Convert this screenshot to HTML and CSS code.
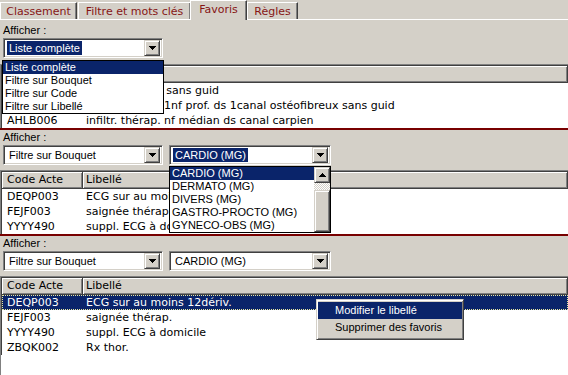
FILE: index.html
```html
<!DOCTYPE html>
<html lang="fr">
<head>
    <meta charset="UTF-8">
    <title>Favoris</title>
    <link rel="stylesheet" href="styles.css">
</head>
<body>
    <div class="tabs">
        <div class="tab t-classement">Classement</div>
        <div class="tab t-filtre">Filtre et mots clés</div>
        <div class="tab t-favoris active">Favoris</div>
        <div class="tab t-regles">Règles</div>
    </div>

    <!-- vue 1 : liste d'affichage ouverte -->
    <section class="panel p1">
        <div class="label">Afficher :</div>
        <div class="filters">
            <div class="combo c1">
                <div class="combo-box">
                    <span class="value sel">Liste complète</span>
                    <span class="btn"><svg width="7" height="4" viewBox="0 0 7 4" shape-rendering="crispEdges"><path d="M0 0h7v1h-1v1h-1v1h-1v1h-1v-1h-1v-1h-1v-1h-1z"/></svg></span>
                </div>
                <ul class="droplist">
                    <li class="hl">Liste complète</li>
                    <li>Filtre sur Bouquet</li>
                    <li>Filtre sur Code</li>
                    <li>Filtre sur Libellé</li>
                </ul>
            </div>
        </div>
        <div class="grid">
            <div class="grid-inner">
                <div class="ghead">
                    <div class="hcell code">Code Acte</div>
                    <div class="hcell lib">Libellé</div>
                </div>
                <div class="row"><span class="code">AHLB004</span><span class="lib">infiltr. thérap.&thinsp; sans guid</span></div>
                <div class="row"><span class="code">AHLB005</span><span class="lib">infiltr. thérap, 1nf prof. ds 1canal ostéofibreux sans guid</span></div>
                <div class="row"><span class="code">AHLB006</span><span class="lib">infiltr. thérap. nf médian ds canal carpien</span></div>
            </div>
        </div>
    </section>

    <!-- vue 2 : liste des bouquets ouverte -->
    <section class="panel p2">
        <div class="label">Afficher :</div>
        <div class="filters">
            <div class="combo c1">
                <div class="combo-box">
                    <span class="value">Filtre sur Bouquet</span>
                    <span class="btn"><svg width="7" height="4" viewBox="0 0 7 4" shape-rendering="crispEdges"><path d="M0 0h7v1h-1v1h-1v1h-1v1h-1v-1h-1v-1h-1v-1h-1z"/></svg></span>
                </div>
            </div>
            <div class="combo c2">
                <div class="combo-box">
                    <span class="value sel">CARDIO (MG)</span>
                    <span class="btn"><svg width="7" height="4" viewBox="0 0 7 4" shape-rendering="crispEdges"><path d="M0 0h7v1h-1v1h-1v1h-1v1h-1v-1h-1v-1h-1v-1h-1z"/></svg></span>
                </div>
                <div class="droplist drop2">
                    <ul class="items">
                        <li class="hl">CARDIO (MG)</li>
                        <li>DERMATO (MG)</li>
                        <li>DIVERS (MG)</li>
                        <li>GASTRO-PROCTO (MG)</li>
                        <li>GYNECO-OBS (MG)</li>
                    </ul>
                    <div class="scrollbar">
                        <span class="btn sbtn"><svg width="7" height="4" viewBox="0 0 7 4" shape-rendering="crispEdges"><path d="M3 0h1v1h1v1h1v1h1v1h-7v-1h1v-1h1v-1h1z"/></svg></span>
                        <span class="track"></span>
                        <span class="thumb"></span>
                    </div>
                </div>
            </div>
        </div>
        <div class="grid">
            <div class="grid-inner">
                <div class="ghead">
                    <div class="hcell code">Code Acte</div>
                    <div class="hcell lib">Libellé</div>
                </div>
                <div class="row"><span class="code">DEQP003</span><span class="lib">ECG sur au moins 12dériv.</span></div>
                <div class="row"><span class="code">FEJF003</span><span class="lib">saignée thérap.</span></div>
                <div class="row"><span class="code">YYYY490</span><span class="lib">suppl. ECG à domicile</span></div>
            </div>
        </div>
    </section>

    <!-- vue 3 : menu contextuel sur un favori -->
    <section class="panel p3">
        <div class="label">Afficher :</div>
        <div class="filters">
            <div class="combo c1">
                <div class="combo-box">
                    <span class="value">Filtre sur Bouquet</span>
                    <span class="btn"><svg width="7" height="4" viewBox="0 0 7 4" shape-rendering="crispEdges"><path d="M0 0h7v1h-1v1h-1v1h-1v1h-1v-1h-1v-1h-1v-1h-1z"/></svg></span>
                </div>
            </div>
            <div class="combo c2">
                <div class="combo-box">
                    <span class="value">CARDIO (MG)</span>
                    <span class="btn"><svg width="7" height="4" viewBox="0 0 7 4" shape-rendering="crispEdges"><path d="M0 0h7v1h-1v1h-1v1h-1v1h-1v-1h-1v-1h-1v-1h-1z"/></svg></span>
                </div>
            </div>
        </div>
        <div class="grid">
            <div class="grid-inner">
                <div class="ghead">
                    <div class="hcell code">Code Acte</div>
                    <div class="hcell lib">Libellé</div>
                </div>
                <div class="row sel"><span class="code">DEQP003</span><span class="lib">ECG sur au moins 12dériv.</span></div>
                <div class="row"><span class="code">FEJF003</span><span class="lib">saignée thérap.</span></div>
                <div class="row"><span class="code">YYYY490</span><span class="lib">suppl. ECG à domicile</span></div>
                <div class="row"><span class="code">ZBQK002</span><span class="lib">Rx thor.</span></div>
            </div>
        </div>
        <ul class="ctx-menu">
            <li class="hl">Modifier le libellé</li>
            <li>Supprimer des favoris</li>
        </ul>
    </section>
</body>
</html>
```

FILE: styles.css
```css
* {
    margin: 0;
    padding: 0;
    box-sizing: border-box;
}
body {
    width: 568px;
    height: 375px;
    overflow: hidden;
    background-color: #d4d0c8;
    font-family: 'Liberation Sans', Arial, sans-serif;
    font-size: 11px;
    color: #000;
}

/* onglets */
.tabs {
    display: flex;
    align-items: flex-end;
    height: 20px;
    border-bottom: 1px solid #fff;
}
.tab {
    height: 17px;
    margin-right: 1px;
    border: 1px solid #fff;
    border-bottom: none;
    border-right-color: #404040;
    box-shadow: inset -1px 0 #808080;
    font-family: 'DejaVu Sans', Verdana, sans-serif;
    font-size: 11px;
    line-height: 17px;
    text-align: center;
    color: #861515;
}
.t-classement { width: 77px; }
.t-filtre { width: 113px; margin-right: 0; }
.t-favoris { width: 57px; }
.t-regles { width: 51px; }
.tab.active {
    height: 20px;
    margin: 0 0 -1px -1px;
    line-height: 18px;
    background-color: #d4d0c8;
    position: relative;
}

/* panneaux */
.panel {
    border-bottom: 2px solid #780000;
    position: relative;
}
.p1 { padding-top: 3px; }
.p3 { border-bottom: none; }
.label {
    height: 15px;
    line-height: 15px;
    padding-left: 3px;
}
.filters {
    display: flex;
    gap: 6px;
    height: 20px;
    padding-left: 3px;
    margin-bottom: 5px;
}
.p1 .filters { margin-bottom: 6px; }

/* listes deroulantes */
.combo {
    position: relative;
    height: 20px;
}
.c1 { width: 160px; }
.c2 { width: 162px; }
.combo-box {
    height: 20px;
    display: flex;
    align-items: center;
    justify-content: space-between;
    padding: 2px;
    background-color: #fff;
    border: 1px solid;
    border-color: #808080 #fff #fff #808080;
    box-shadow: inset 1px 1px #404040, inset -1px -1px #d4d0c8;
}
.value {
    margin-left: 1px;
    padding: 0 2px;
    line-height: 14px;
    white-space: nowrap;
}
.value.sel,
.hl {
    background-color: #0a246a;
    color: #fff;
}
.btn {
    width: 16px;
    height: 16px;
    flex: none;
    display: flex;
    align-items: center;
    justify-content: center;
    background-color: #d4d0c8;
    border: 1px solid;
    border-color: #d4d0c8 #404040 #404040 #d4d0c8;
    box-shadow: inset 1px 1px #fff, inset -1px -1px #808080;
}
.droplist {
    position: absolute;
    left: -1px;
    top: 22px;
    width: 162px;
    z-index: 5;
    list-style-type: none;
    background-color: #fff;
    border: 1px solid #000;
}
.droplist li,
.items li {
    height: 13px;
    line-height: 13px;
    padding-left: 2px;
    white-space: nowrap;
}
.drop2 {
    left: 0;
    top: 21px;
    display: flex;
}
.items {
    flex: 1;
    list-style-type: none;
}
.scrollbar {
    width: 16px;
    display: flex;
    flex-direction: column;
}
.track {
    height: 7px;
    background: repeating-conic-gradient(#d4d0c8 0 25%, #fff 0 50%) 0 0 / 2px 2px;
}
.thumb {
    flex: 1;
    background-color: #d4d0c8;
    border: 1px solid;
    border-color: #d4d0c8 #404040 #404040 #d4d0c8;
    box-shadow: inset 1px 1px #fff, inset -1px -1px #808080;
}

/* tableau des actes */
.grid {
    background-color: #fff;
    border-top: 1px solid #808080;
    border-left: 1px solid #808080;
    overflow: hidden;
}
.p3 .grid { height: 100px; }
.grid-inner {
    border-top: 1px solid #404040;
    border-left: 1px solid #404040;
}
.ghead {
    display: flex;
    height: 17px;
    background-color: #d4d0c8;
}
.hcell {
    height: 17px;
    line-height: 16px;
    border-right: 1px solid #404040;
    border-bottom: 1px solid #404040;
    box-shadow: inset 1px 1px #fff, inset -1px -1px #808080;
    font-family: 'DejaVu Sans', Verdana, sans-serif;
    padding-left: 5px;
}
.hcell.code { width: 81px; }
.hcell.lib { flex: 1; padding-left: 3px; }
.row {
    display: flex;
    height: 15px;
    line-height: 15px;
    white-space: nowrap;
    font-family: 'DejaVu Sans', Verdana, sans-serif;
}
.row .code {
    width: 81px;
    flex: none;
    padding-left: 5px;
}
.row .lib { padding-left: 3px; }
.row.sel {
    background-color: #0a246a;
    color: #fff;
    outline: 1px dotted #e8e8a0;
    outline-offset: -1px;
}

/* menu contextuel */
.ctx-menu {
    position: absolute;
    left: 316px;
    top: 63px;
    width: 148px;
    z-index: 5;
    list-style-type: none;
    padding: 2px 0 3px;
    background-color: #d4d0c8;
    border: 1px solid;
    border-color: #d4d0c8 #404040 #404040 #d4d0c8;
    box-shadow: inset 1px 1px #fff, inset -1px -1px #808080;
}
.ctx-menu li {
    height: 17px;
    line-height: 16px;
    margin: 0 1px;
    padding-left: 17px;
}
```
